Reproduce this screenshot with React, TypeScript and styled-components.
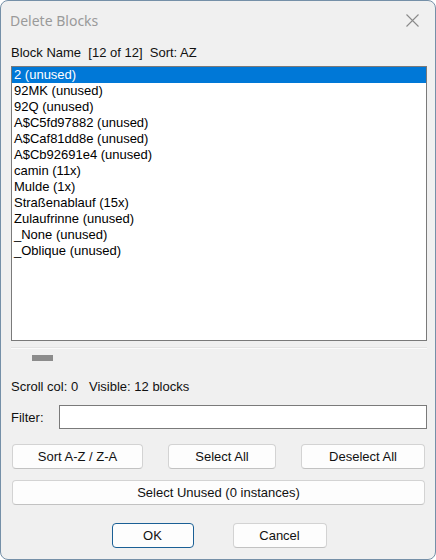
import React, { useState } from 'react';
import styled, { createGlobalStyle } from 'styled-components';

const GlobalStyle = createGlobalStyle`
  html, body {
    margin: 0;
    padding: 0;
    background: #ffffff;
  }
  * {
    box-sizing: border-box;
  }
`;

const Window = styled.div`
  width: 436px;
  height: 560px;
  background: #f0f0f0;
  border: 1px solid #7590a8;
  border-radius: 8px;
  display: flex;
  flex-direction: column;
  font-family: "Liberation Sans", Arial, sans-serif;
  font-size: 13px;
  color: #111111;
  overflow: hidden;
`;

const TitleBar = styled.div`
  height: 39px;
  display: flex;
  align-items: center;
  justify-content: space-between;
  padding: 0 16px 0 9px;
`;

const Title = styled.div`
  font-family: "Noto Sans", "Liberation Sans", sans-serif;
  font-size: 14px;
  color: #9a9a9a;
`;

const CloseButton = styled.button`
  border: none;
  background: transparent;
  padding: 0;
  width: 14px;
  height: 14px;
  display: flex;
  align-items: center;
  justify-content: center;
`;

const Body = styled.div`
  flex: 1;
  display: flex;
  flex-direction: column;
  padding: 0 8px 0 10px;
`;

const Caption = styled.div`
  height: 26px;
  display: flex;
  align-items: center;
  white-space: pre;
  margin-top: -1px;
  margin-bottom: 1px;
`;

const ListBox = styled.div`
  height: 275px;
  background: #ffffff;
  border: 1px solid #7a7a7a;
  display: flex;
  flex-direction: column;
`;

const ListItem = styled.div<{ $selected?: boolean }>`
  height: 16px;
  line-height: 16px;
  padding-left: 2px;
  font-family: "Liberation Sans", Arial, sans-serif;
  font-size: 13px;
  white-space: pre;
  background: ${p => (p.$selected ? '#0078d7' : 'transparent')};
  color: ${p => (p.$selected ? '#ffffff' : '#000000')};
`;

const Separator = styled.div`
  height: 2px;
  margin-top: 6px;
  background: #fbfbfb;
  border-top: 1px solid #e4e4e4;
`;

const ScrollThumbRow = styled.div`
  height: 15px;
  display: flex;
  align-items: center;
  padding-left: 21px;
  margin-top: 1px;
`;

const ScrollThumb = styled.div`
  width: 21px;
  height: 6px;
  background: #8c8c8c;
`;

const Status = styled.div`
  height: 30px;
  margin-top: 6px;
  display: flex;
  align-items: center;
  white-space: pre;
`;

const FilterRow = styled.div`
  display: flex;
  align-items: center;
  margin-top: 4px;
  height: 24px;
`;

const FilterLabel = styled.label`
  width: 48px;
`;

const FilterInput = styled.input`
  flex: 1;
  height: 24px;
  border: 1px solid #7a7a7a;
  background: #ffffff;
  outline: none;
`;

const ButtonRow = styled.div`
  display: flex;
  justify-content: space-between;
  margin-top: 15px;
  padding: 0 2px 0 1px;
`;

const Button = styled.button<{ $width?: number; $default?: boolean }>`
  width: ${p => (p.$width ? `${p.$width}px` : '100%')};
  height: 25px;
  background: #fdfdfd;
  border: 1px solid ${p => (p.$default ? '#1a5f95' : '#d3d3d3')};
  border-bottom-color: ${p => (p.$default ? '#1a5f95' : '#c2c2c2')};
  border-radius: 4px;
  font-family: "Liberation Sans", Arial, sans-serif;
  font-size: 13px;
  color: #111111;
  padding: 0;
`;

const WideRow = styled.div`
  margin-top: 11px;
  padding: 0 2px 0 1px;
`;

const DialogButtons = styled.div`
  display: flex;
  justify-content: center;
  gap: 39px;
  margin-top: 18px;
  padding-left: 0;
`;

const blocks = [
  '2 (unused)',
  '92MK (unused)',
  '92Q (unused)',
  'A$C5fd97882 (unused)',
  'A$Caf81dd8e (unused)',
  'A$Cb92691e4 (unused)',
  'camin (11x)',
  'Mulde (1x)',
  'Straßenablauf (15x)',
  'Zulaufrinne (unused)',
  '_None (unused)',
  '_Oblique (unused)',
];

export default function App() {
  const [selected, setSelected] = useState(0);
  const [filter, setFilter] = useState('');

  return (
    <>
      <GlobalStyle />
      <Window>
        <TitleBar>
          <Title>Delete Blocks</Title>
          <CloseButton aria-label="Close">
            <svg width="13" height="13" viewBox="0 0 13 13">
              <path d="M0.5 0.5 L12.5 12.5 M12.5 0.5 L0.5 12.5" stroke="#8a8a8a" strokeWidth="1.1" fill="none" />
            </svg>
          </CloseButton>
        </TitleBar>
        <Body>
          <Caption>{'Block Name  [12 of 12]  Sort: AZ'}</Caption>
          <ListBox>
            {blocks.map((b, i) => (
              <ListItem key={b} $selected={i === selected} onClick={() => setSelected(i)}>
                {b}
              </ListItem>
            ))}
          </ListBox>
          <Separator />
          <ScrollThumbRow>
            <ScrollThumb />
          </ScrollThumbRow>
          <Status>{'Scroll col: 0   Visible: 12 blocks'}</Status>
          <FilterRow>
            <FilterLabel>Filter:</FilterLabel>
            <FilterInput value={filter} onChange={e => setFilter(e.target.value)} />
          </FilterRow>
          <ButtonRow>
            <Button $width={131}>Sort A-Z / Z-A</Button>
            <Button $width={108}>Select All</Button>
            <Button $width={124}>Deselect All</Button>
          </ButtonRow>
          <WideRow>
            <Button>Select Unused (0 instances)</Button>
          </WideRow>
          <DialogButtons>
            <Button $width={82} $default>OK</Button>
            <Button $width={94}>Cancel</Button>
          </DialogButtons>
        </Body>
      </Window>
    </>
  );
}
